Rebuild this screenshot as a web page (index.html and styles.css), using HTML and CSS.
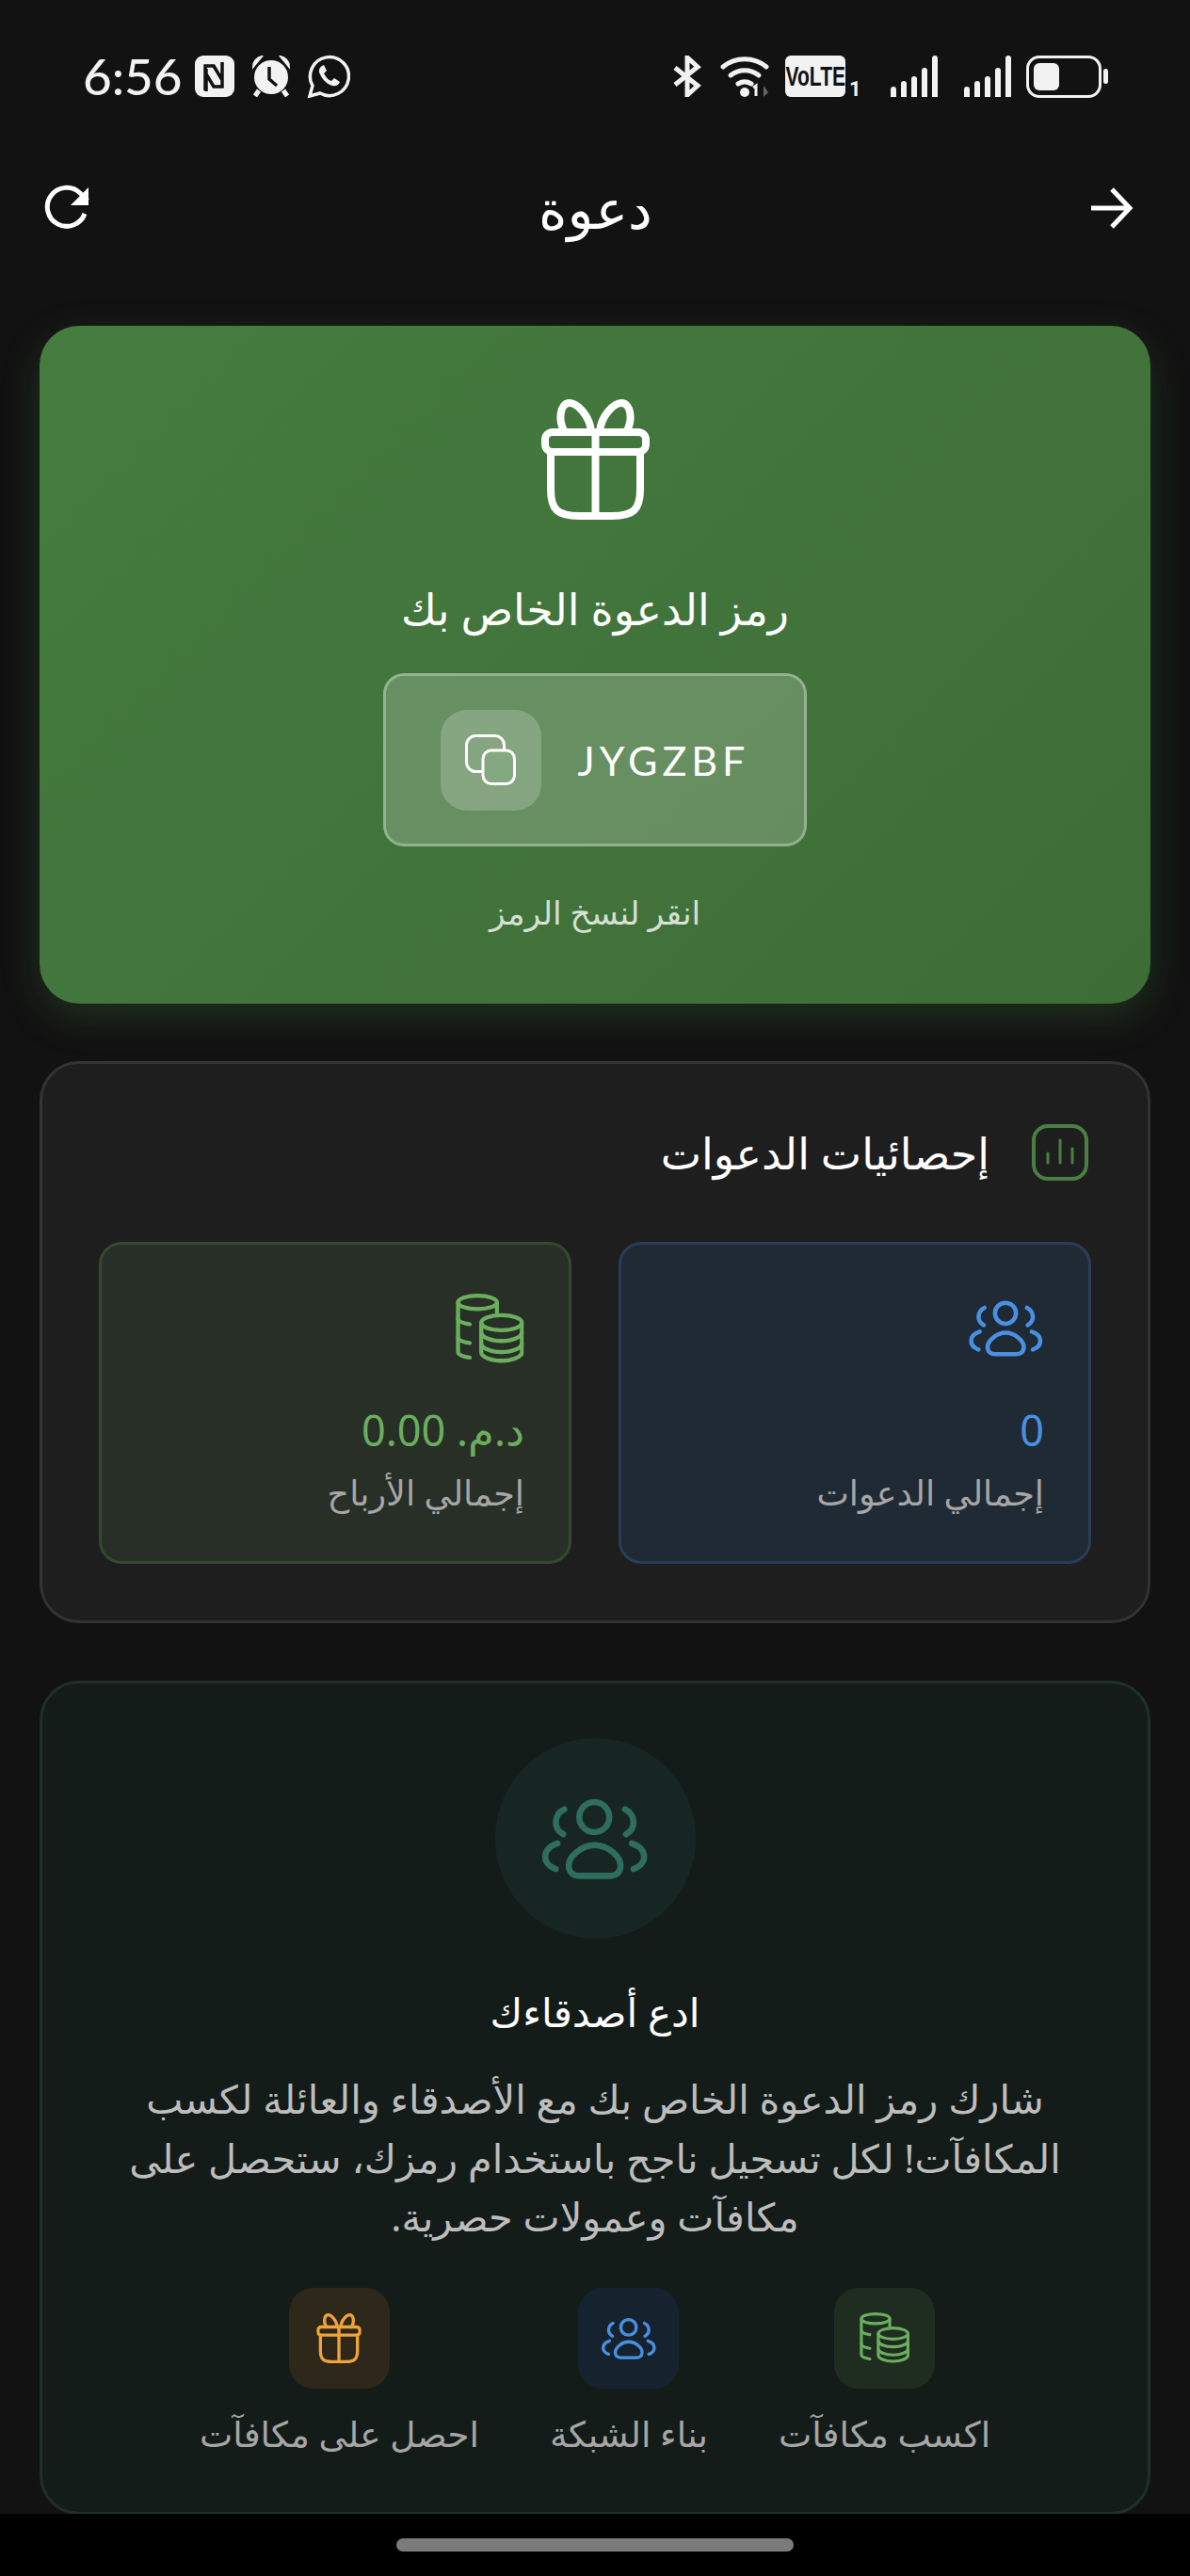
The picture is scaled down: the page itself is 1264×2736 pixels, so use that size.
FILE: index.html
```html
<!DOCTYPE html>
<html lang="ar" dir="rtl">
<head>
  <meta charset="UTF-8" />
  <meta name="viewport" content="width=device-width, initial-scale=1.0"/>
  <title>دعوة</title>
  <link rel="stylesheet" href="styles.css">
</head>
<body>

<div class="screen">
  <!-- شريط الحالة -->
  <div class="status-bar" dir="ltr">
    <div class="status-left">
      <span class="clock">6:56</span>
      <svg class="st-nfc" viewBox="0 0 44 44"><rect width="42" height="44" x="1" rx="9" fill="#f2f2f2"/><path d="M12 37V11l9 0 9 15M13 14v24M30 7v26l-9 0-9-15" fill="none" stroke="#121212" stroke-width="3.500"/></svg>
      <svg class="st-alarm" viewBox="0 0 44 44"><path d="M3 12C3 6 7 2 12 1L3 12ZM41 12C41 6 37 2 32 1L41 12Z" fill="#f2f2f2" stroke="#f2f2f2" stroke-width="2"/><circle cx="22" cy="23" r="18" fill="#f2f2f2"/><path d="M9 37l-4 6M35 37l4 6" stroke="#f2f2f2" stroke-width="5"/><path d="M20 12v13l8 7" fill="none" stroke="#121212" stroke-width="3.500"/></svg>
      <svg class="st-whatsapp" viewBox="0 0 46 46"><path d="M3 44l3-11A20.500 20.500 0 1 1 14 41Z" fill="none" stroke="#f2f2f2" stroke-width="3.500"/><path d="M16 12c-3 2-4 5-2 9 3 6 7 10 13 12 4 1 7-1 8-4l-6-4-3 3c-3-1-6-4-8-8l3-3-3-6z" fill="#f2f2f2"/></svg>
    </div>
    <div class="status-right">
      <svg class="st-bt" viewBox="0 0 32 44"><path d="M3 13l24 19-11 10V2l11 10L3 31" fill="none" stroke="#f2f2f2" stroke-width="5"/></svg>
      <svg class="st-wifi" viewBox="0 0 55 44"><g fill="none" stroke="#f2f2f2" stroke-width="5" stroke-linecap="round"><path d="M3 12c13-11 33-11 46 0"/><path d="M11 21c9-7 21-7 30 0"/><path d="M19 30c5-3 9-3 14 0"/></g><circle cx="26" cy="39" r="5" fill="#f2f2f2"/><path d="M38 43V32l-3 2" fill="none" stroke="#f2f2f2" stroke-width="3"/><path d="M46 44V32l5 7z" fill="#666"/></svg>
      <div class="volte"><span>VoLTE</span></div>
      <span class="sim-no">1</span>
      <div class="signal"><i class="b1"></i><i class="b2"></i><i class="b3"></i><i class="b4"></i><i class="b5"></i></div>
      <div class="signal signal-2"><i class="b1"></i><i class="b2"></i><i class="b3"></i><i class="b4"></i><i class="b5"></i></div>
      <div class="battery"><div class="battery-body"><div class="battery-fill"></div></div><div class="battery-nub"></div></div>
    </div>
  </div>

  <!-- الهيدر -->
  <div class="top-bar">
    <svg class="nav-icon nav-back" viewBox="0 0 50 50"><path d="M5 25 L44 25 M27 5 L46 25 L27 45" fill="none" stroke="#fff" stroke-width="5"/></svg>
    <h1>دعوة</h1>
    <svg class="nav-icon nav-refresh" viewBox="0 0 50 50"><path d="M43 31A20.500 20.500 0 1 1 38 9L46 17" fill="none" stroke="#fff" stroke-width="5"/><path d="M47 3V22H28Z" fill="#fff"/></svg>
  </div>

  <div class="content">
    <!-- بطاقة الرمز -->
    <div class="code-card">
      <svg class="gift-big" viewBox="0 0 115 128"><use href="#i-gift"/></svg>
      <h2>رمز الدعوة الخاص بك</h2>
      <div class="code-box">
        <span class="code-text" dir="ltr">JYGZBF</span>
        <div class="copy-btn">
          <svg viewBox="0 0 54 54"><rect x="1.500" y="1.500" width="40" height="38" rx="10" fill="none" stroke="#fff" stroke-width="3"/><rect x="19" y="17" width="33.500" height="35.500" rx="9" fill="#84a980" stroke="#fff" stroke-width="3"/></svg>
        </div>
      </div>
      <p class="hint">انقر لنسخ الرمز</p>
    </div>

    <!-- الإحصائيات -->
    <div class="stats-card">
      <div class="stats-head">
        <svg class="chart-icon" viewBox="0 0 60 60"><rect x="2" y="2" width="56" height="56" rx="15" fill="none" stroke="#4a7f43" stroke-width="4"/><path d="M17 41V31M30 41V17M43 41V26" stroke="#4a7f43" stroke-width="3" stroke-linecap="round"/></svg>
        <h3>إحصائيات الدعوات</h3>
      </div>
      <div class="stats-grid">
        <div class="stat stat-blue">
          <svg class="stat-icon users" viewBox="0 0 32 24"><use href="#i-users"/></svg>
          <div class="stat-value">0</div>
          <div class="stat-label">إجمالي الدعوات</div>
        </div>
        <div class="stat stat-green">
          <svg class="stat-icon coins" viewBox="0 0 24 24"><use href="#i-coins"/></svg>
          <div class="stat-value">د.م. 0.00</div>
          <div class="stat-label">إجمالي الأرباح</div>
        </div>
      </div>
    </div>

    <!-- ادع أصدقاءك -->
    <div class="invite-card">
      <div class="invite-circle">
        <svg viewBox="0 0 32 24"><use href="#i-users"/></svg>
      </div>
      <h3>ادع أصدقاءك</h3>
      <p>شارك رمز الدعوة الخاص بك مع الأصدقاء والعائلة لكسب المكافآت! لكل تسجيل ناجح باستخدام رمزك، ستحصل على مكافآت وعمولات حصرية.</p>
      <div class="features">
        <div class="feature">
          <div class="tile tile-green"><svg viewBox="0 0 24 24"><use href="#i-coins"/></svg></div>
          <span>اكسب مكافآت</span>
        </div>
        <div class="feature">
          <div class="tile tile-blue"><svg class="tile-users" viewBox="0 0 32 24"><use href="#i-users"/></svg></div>
          <span>بناء الشبكة</span>
        </div>
        <div class="feature">
          <div class="tile tile-orange"><svg class="tile-gift" viewBox="0 0 115 128"><use href="#i-gift"/></svg></div>
          <span>احصل على مكافآت</span>
        </div>
      </div>
    </div>
  </div>

  <div class="home-bar"><div class="home-pill"></div></div>
</div>

<!-- الأيقونات -->
<svg class="defs" width="0" height="0">
  <symbol id="i-gift" viewBox="0 0 115 128">
    <g fill="none" stroke="currentColor" stroke-width="8" stroke-linecap="round" stroke-linejoin="round">
      <rect x="4" y="35" width="107" height="21" rx="8"/>
      <path d="M10 56v40c0 22 8 28 30 28h35c22 0 30-6 30-28V56"/>
      <path d="M57.500 35V124"/>
      <path d="M53 35C52 18 38 4 30 4 20 4 17 22 25 35"/>
      <path d="M62 35C63 18 77 4 85 4 95 4 98 22 90 35"/>
    </g>
  </symbol>
  <symbol id="i-users" viewBox="0 0 32 24">
    <g fill="none" stroke="currentColor" stroke-width="1.800" stroke-linecap="round" stroke-linejoin="round">
      <circle cx="15.800" cy="5.800" r="4.400"/>
      <path d="M7 3.500C4 5 3.500 9 6.700 10.800"/>
      <path d="M24.800 3.500C27.800 5 28.300 9 25.100 10.800"/>
      <path d="M5 13.500C0.300 15 0.300 19.500 4.500 21"/>
      <path d="M26.800 13.500C31.500 15 31.500 19.500 27.300 21"/>
      <path d="M15.900 14C12 14 8.300 17.400 8.300 20 8.300 22 9.800 23 11.500 23H20.300C22 23 23.500 22 23.500 20 23.500 17.400 19.800 14 15.900 14Z"/>
    </g>
  </symbol>
  <symbol id="i-coins" viewBox="0 0 24 24">
    <g fill="none" stroke="currentColor" stroke-width="1.400" stroke-linecap="round" stroke-linejoin="round">
      <ellipse cx="8" cy="3" rx="6.700" ry="2.300"/>
      <path d="M1.300 3v17c0 1 1.500 1.600 4 2"/>
      <path d="M1.300 8.500c0 1 1.500 1.600 4 2M1.300 15c0 1 1.500 1.600 4 2M14.700 3v3.500"/>
      <ellipse cx="16.300" cy="10" rx="7" ry="2.600"/>
      <path d="M9.300 10v10.200c0 1.500 3.100 2.900 7 2.900s7-1.400 7-2.900V10"/>
      <path d="M9.300 13.400c0 1.500 3.100 2.900 7 2.900s7-1.400 7-2.900M9.300 17.200c0 1.500 3.100 2.900 7 2.900s7-1.400 7-2.900"/>
    </g>
  </symbol>
</svg>

</body>
</html>
```

FILE: styles.css
```css
* {
  box-sizing: border-box;
}

body {
  margin: 0;
  background: #121212;
  color: white;
  font-family: "Noto Sans", "DejaVu Sans", sans-serif;
}

h1, h2, h3, p {
  margin: 0;
  font-weight: 400;
}

.defs {
  position: absolute;
}

.screen {
  height: 100vh;
  display: flex;
  flex-direction: column;
  overflow: hidden;
}

/* شريط الحالة */
.status-bar {
  display: flex;
  justify-content: space-between;
  align-items: center;
  height: 46px;
  margin-top: 58px;
  padding: 0 87px 0 88px;
  flex-shrink: 0;
}

.status-left, .status-right {
  display: flex;
  align-items: center;
}

.clock {
  font-family: Lato, sans-serif;
  font-weight: 500;
  font-size: 53px;
  line-height: 46px;
  color: #f2f2f2;
  width: 118px;
}

.st-nfc { width: 44px; height: 44px; }
.st-alarm { width: 44px; height: 44px; margin-left: 16px; }
.st-whatsapp { width: 46px; height: 46px; margin-left: 16px; }

.st-bt { width: 32px; height: 44px; }
.st-wifi { width: 55px; height: 44px; margin-left: 19px; }

.volte {
  width: 64px;
  height: 44px;
  margin-left: 14px;
  background: #f2f2f2;
  border-radius: 6px;
  display: flex;
  align-items: center;
  justify-content: center;
}

.volte span {
  font-family: "Liberation Sans", sans-serif;
  font-weight: 700;
  font-size: 30px;
  color: #121212;
  transform: scaleX(0.7);
}

.sim-no {
  font-family: Roboto, sans-serif;
  font-weight: 700;
  font-size: 22px;
  line-height: 18px;
  color: #f2f2f2;
  align-self: flex-end;
  margin-left: 4px;
  width: 10px;
}

.signal {
  display: flex;
  align-items: flex-end;
  gap: 5px;
  height: 44px;
  margin-left: 34px;
}

.signal-2 {
  margin-left: 28px;
}

.signal i {
  display: block;
  width: 6px;
  background: #f2f2f2;
  border-radius: 3px 3px 0 0;
}

.b1 { height: 11px; }
.b2 { height: 17px; }
.b3 { height: 22px; }
.b4 { height: 31px; }
.b5 { height: 44px; }

.battery {
  display: flex;
  align-items: center;
  margin-left: 16px;
  gap: 2px;
}

.battery-body {
  width: 80px;
  height: 45px;
  border: 3px solid #f2f2f2;
  border-radius: 14px;
  padding: 5px;
}

.battery-fill {
  width: 27px;
  height: 100%;
  background: #f2f2f2;
  border-radius: 6px;
}

.battery-nub {
  width: 5px;
  height: 16px;
  background: #f2f2f2;
  border-radius: 3px;
}

/* الهيدر */
.top-bar {
  display: grid;
  grid-template-columns: 1fr auto 1fr;
  align-items: center;
  padding: 0 46px 0 47px;
  margin-top: 91px;
  height: 52px;
  flex-shrink: 0;
}

.top-bar h1 {
  font-size: 58px;
  font-weight: 500;
  line-height: 52px;
}

.nav-icon {
  width: 50px;
  height: 50px;
}

.nav-back {
  margin-right: 14px;
}

.nav-refresh {
  justify-self: end;
}

.content {
  flex: 1;
  min-height: 0;
  overflow: hidden;
  display: flex;
  flex-direction: column;
  gap: 61px;
  padding: 99px 42px 0;
}

/* بطاقة الرمز */
.code-card {
  height: 720px;
  flex-shrink: 0;
  border-radius: 42px;
  background: linear-gradient(135deg, #467c40, #3d6d36);
  box-shadow: 0 14px 40px rgba(76, 140, 70, 0.25);
  display: flex;
  flex-direction: column;
  align-items: center;
  padding-top: 78px;
}

.gift-big {
  width: 115px;
  height: 128px;
  color: white;
}

.code-card h2 {
  margin-top: 62px;
  font-size: 46px;
  font-weight: 500;
  line-height: 64px;
}

.code-box {
  margin-top: 37px;
  width: 450px;
  height: 184px;
  background: rgba(255, 255, 255, 0.2);
  border: 3px solid rgba(255, 255, 255, 0.3);
  border-radius: 22px;
  display: flex;
  align-items: center;
  justify-content: center;
  gap: 39px;
}

.code-text {
  font-family: Lato, sans-serif;
  font-size: 43px;
  letter-spacing: 5px;
}

.copy-btn {
  width: 107px;
  height: 107px;
  background: rgba(255, 255, 255, 0.2);
  border-radius: 28px;
  display: flex;
  align-items: center;
  justify-content: center;
}

.copy-btn svg {
  width: 54px;
  height: 54px;
}

.hint {
  margin-top: 46px;
  font-size: 34.500px;
  color: rgba(255, 255, 255, 0.8);
}

/* الإحصائيات */
.stats-card {
  height: 597px;
  flex-shrink: 0;
  background: #1e1e1e;
  border: 3px solid #333;
  border-radius: 42px;
  padding: 64px 60px 0;
}

.stats-head {
  display: flex;
  align-items: center;
  gap: 45px;
  padding-right: 3px;
  height: 60px;
}

.chart-icon {
  width: 60px;
  height: 60px;
}

.stats-head h3 {
  font-size: 46px;
  font-weight: 500;
}

.stats-grid {
  display: grid;
  grid-template-columns: 1fr 1fr;
  gap: 50px;
  margin-top: 65px;
}

.stat {
  height: 342px;
  border-radius: 24px;
  border: 3px solid;
  padding: 52px 47px 0;
  display: flex;
  flex-direction: column;
  align-items: flex-start;
}

.stat-blue {
  background: #1f2a35;
  border-color: #293e56;
  color: #4a90e2;
}

.stat-green {
  background: #282f26;
  border-color: #36482f;
  color: #6aae5e;
}

.stat-icon {
  height: 74px;
  width: 75px;
}

.stat-icon.users {
  width: 81px;
  height: 61px;
  margin-top: 6px;
  margin-bottom: 7px;
}

.stat-value {
  margin-top: 41px;
  font-size: 45px;
  line-height: 60px;
}

.stat-label {
  margin-top: 11px;
  font-size: 36.500px;
  color: #a6a6a6;
}

/* ادع أصدقاءك */
.invite-card {
  height: 886px;
  flex-shrink: 0;
  background: #141c1a;
  border: 3px solid #1f2f2b;
  border-radius: 42px;
  display: flex;
  flex-direction: column;
  align-items: center;
  padding: 58px 60px 0;
}

.invite-circle {
  width: 213px;
  height: 213px;
  border-radius: 50%;
  background: #182623;
  color: #2f6e5e;
  display: flex;
  align-items: center;
  justify-content: center;
}

.invite-circle svg {
  width: 116px;
  height: 87px;
}

.invite-card h3 {
  margin-top: 48px;
  font-size: 42px;
  font-weight: 500;
  line-height: 60px;
}

.invite-card p {
  margin-top: 31px;
  font-size: 41.500px;
  line-height: 62.500px;
  color: #bdbdbd;
  text-align: center;
}

.features {
  display: flex;
  justify-content: center;
  gap: 75px;
  margin-top: 44px;
}

.feature {
  display: flex;
  flex-direction: column;
  align-items: center;
  gap: 22px;
}

.feature span {
  font-size: 37.500px;
  color: #a6a6a6;
  white-space: nowrap;
}

.tile {
  width: 107px;
  height: 107px;
  border-radius: 26px;
  display: flex;
  align-items: center;
  justify-content: center;
}

.tile svg {
  width: 54px;
  height: 54px;
}

.tile svg.tile-users {
  width: 60px;
  height: 45px;
}

.tile svg.tile-gift {
  width: 48px;
  height: 53px;
}

.tile-green { background: #1f2d21; color: #6aae5e; }
.tile-blue { background: #16232e; color: #4a90e2; }
.tile-orange { background: #2d281a; color: #f0a23c; }

.home-bar {
  height: 66px;
  flex-shrink: 0;
  background: #000;
  display: flex;
  justify-content: center;
  padding-top: 26px;
}

.home-pill {
  width: 422px;
  height: 14px;
  background: #7b7b7b;
  border-radius: 7px;
}
```
